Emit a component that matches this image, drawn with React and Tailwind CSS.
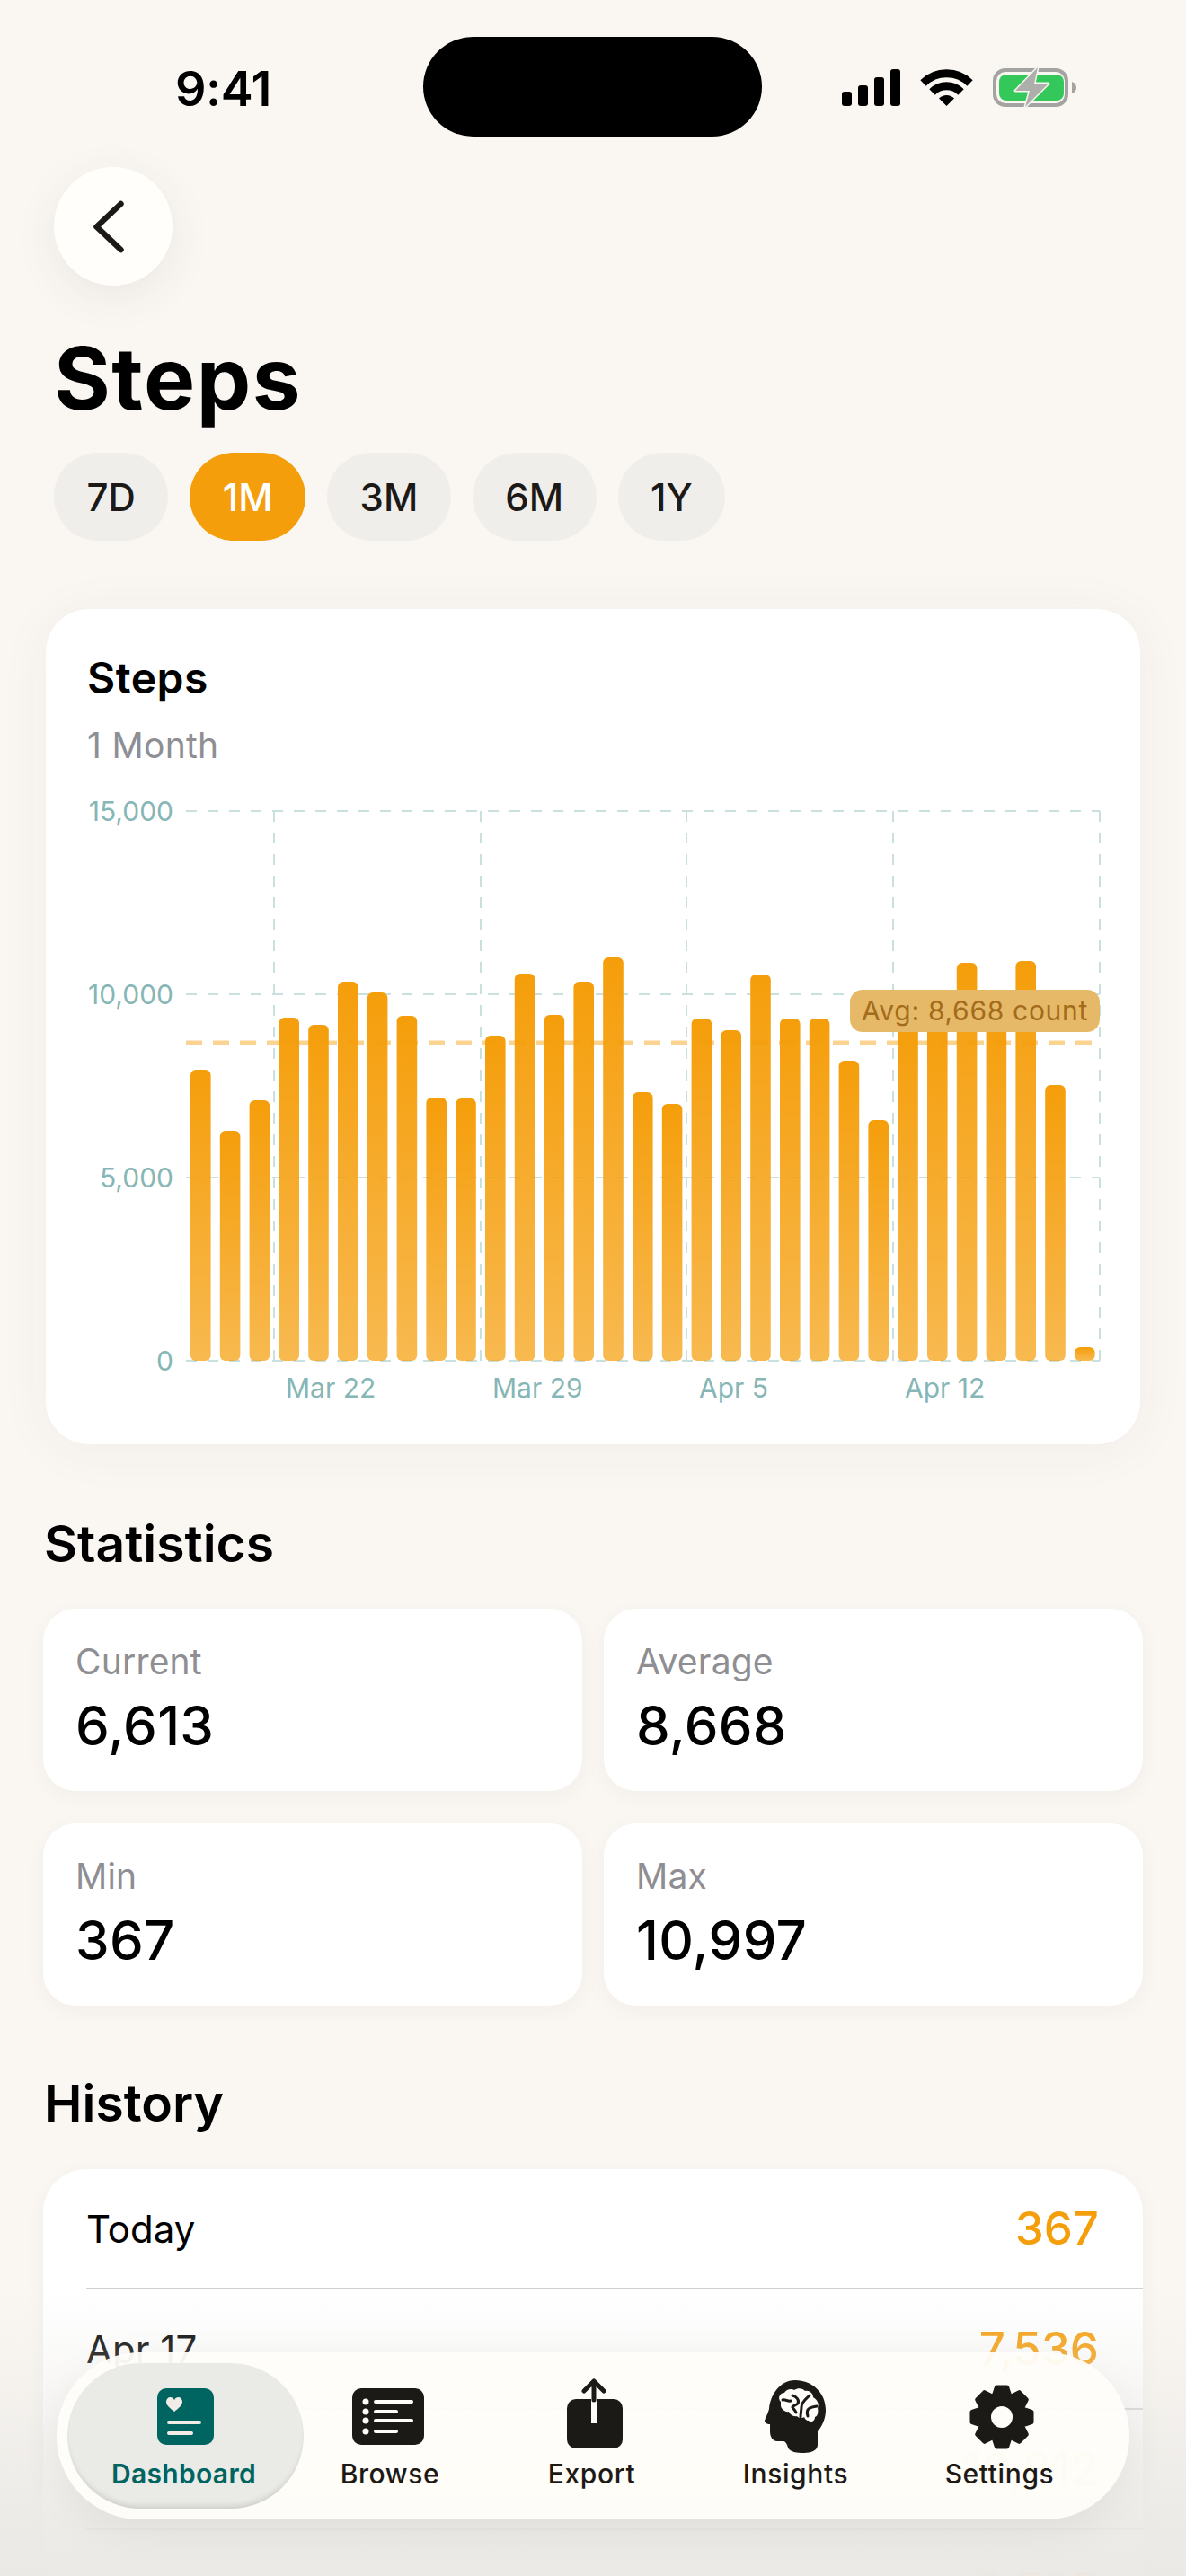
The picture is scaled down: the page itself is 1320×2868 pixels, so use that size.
import React from 'react';

const RANGES = ['7D', '1M', '3M', '6M', '1Y'];

// top edge of each bar, in page pixels
const BAR_TOPS = [
  1191, 1259, 1225, 1133, 1141, 1093, 1105, 1131, 1222, 1223, 1153, 1084, 1130, 1093, 1066, 1216,
  1229, 1134, 1147, 1085, 1134, 1134, 1181, 1247, 1140, 1130, 1072, 1120, 1070, 1208, 1500,
];
const BASELINE = 1515;

const Y_TICKS = [
  { label: '15,000', y: 903 },
  { label: '10,000', y: 1107 },
  { label: '5,000', y: 1311 },
  { label: '0', y: 1515 },
];
const GRID_X = [305, 535, 764, 994, 1224];
const X_LABELS = [
  { label: 'Mar 22', x: 318 },
  { label: 'Mar 29', x: 548 },
  { label: 'Apr 5', x: 778 },
  { label: 'Apr 12', x: 1007 },
];

const STATS = [
  { label: 'Current', value: '6,613' },
  { label: 'Average', value: '8,668' },
  { label: 'Min', value: '367' },
  { label: 'Max', value: '10,997' },
];

const HISTORY = [
  { date: 'Today', value: '367' },
  { date: 'Apr 17', value: '7,536' },
  { date: 'Apr 16', value: '10,812' },
  { date: 'Apr 15', value: '9,785' },
];

const StatusIcons = () => (
  <svg width="270" height="52" viewBox="930 70 270 52">
    <rect x="937" y="101" width="11" height="16" rx="3" fill="#000" />
    <rect x="955" y="94" width="11" height="23" rx="3" fill="#000" />
    <rect x="973" y="85" width="11" height="32" rx="3" fill="#000" />
    <rect x="991" y="76" width="11" height="41" rx="3" fill="#000" />
    <g transform="translate(1025 75)" fill="none" stroke="#000" strokeWidth="9">
      <path d="M2.5 16.5 A37 37 0 0 1 54.5 16.5" />
      <path d="M12.5 26.5 A22.5 22.5 0 0 1 44.5 26.5" />
      <path d="M28.5 42 L20 33.5 A12 12 0 0 1 37 33.5 Z" fill="#000" stroke="none" />
    </g>
    <rect x="1107" y="77" width="80" height="39" rx="12" fill="none" stroke="#a3a3a1" strokeWidth="4" />
    <rect x="1112" y="82" width="72" height="29" rx="8" fill="#34c759" />
    <path d="M1193 90 C1196 91 1198 93 1198 96.5 C1198 100 1196 102 1193 103 Z" fill="#a3a3a1" />
    <path
      d="M1155 74 L1130 100 L1146 100 L1141 118 L1167 92 L1151 92 Z"
      fill="#aeaeab"
      stroke="#f8f6f1"
      strokeWidth="3"
      strokeLinejoin="round"
      paintOrder="stroke"
    />
  </svg>
);

const Chart = () => (
  <svg className="block" width="1218" height="754" viewBox="51 854 1218 754">
    <defs>
      <linearGradient id="bar" x1="0" y1="0" x2="0" y2="1">
        <stop offset="0%" stopColor="#f59e0b" />
        <stop offset="100%" stopColor="#f59e0b" stopOpacity="0.72" />
      </linearGradient>
    </defs>
    {Y_TICKS.map((tick) => (
      <g key={tick.label}>
        <text x="193" y={tick.y + 11} textAnchor="end" fontSize="30" fill="#86b6b5">
          {tick.label}
        </text>
        <line x1="207" x2="1224" y1={tick.y} y2={tick.y} stroke="#c9e0de" strokeWidth="2" strokeDasharray="12 12" />
      </g>
    ))}
    {GRID_X.map((x) => (
      <line key={x} x1={x} x2={x} y1="903" y2="1515" stroke="#c9e0de" strokeWidth="2" strokeDasharray="12 12" />
    ))}
    {BAR_TOPS.map((top, i) => (
      <rect key={i} x={212 + 32.8 * i} y={top} width="22.6" height={BASELINE - top} rx="6" fill="url(#bar)" />
    ))}
    <line x1="207" x2="1216" y1="1161" y2="1161" stroke="#f59e0b" strokeOpacity="0.45" strokeWidth="5" strokeDasharray="18 12" />
    <rect x="946" y="1102" width="278" height="47" rx="14" fill="#e6b969" />
    <text x="959" y="1136" fontSize="30" letterSpacing="0.7" fill="#a36c1a">
      Avg: 8,668 count
    </text>
    {X_LABELS.map((tick) => (
      <text key={tick.label} x={tick.x} y="1556" fontSize="30" fill="#86b6b5">
        {tick.label}
      </text>
    ))}
  </svg>
);

const gearPath = () => {
  const pts = [];
  for (let i = 0; i < 8; i++) {
    const a = -Math.PI / 2 + (i * Math.PI) / 4;
    [[-0.36, 25], [-0.17, 33.5], [0.17, 33.5], [0.36, 25]].forEach(([da, r]) => {
      pts.push(`${(47 + r * Math.cos(a + da)).toFixed(2)} ${(43 + r * Math.sin(a + da)).toFixed(2)}`);
    });
  }
  return `M${pts.join(' L')} Z`;
};

const DashboardIcon = () => (
  <svg width="90" height="86" viewBox="0 0 90 86">
    <rect x="15" y="11" width="63" height="63" rx="10" fill="#006561" />
    <path
      d="M35 37 C30 33 26 30 26 26 C26 23 28 21 30.500 21 C32.500 21 34 22 35 24 C36 22 37.500 21 39.500 21 C42 21 44 23 44 26 C44 30 40 33 35 37 Z"
      transform="translate(-1 0)"
      fill="#f1ece6"
    />
    <rect x="26" y="47" width="38" height="4" rx="2" fill="#f1ece6" />
    <rect x="26" y="59" width="29" height="4" rx="2" fill="#f1ece6" />
  </svg>
);

const BrowseIcon = () => (
  <svg width="90" height="86" viewBox="0 0 90 86">
    <rect x="3" y="11" width="80" height="63" rx="10" fill="#1c1a17" />
    {[26, 37, 47, 59].map((y, i) => (
      <g key={y} fill="#fefdf9">
        <circle cx="18" cy={y} r="3.500" />
        <rect x="27" y={y - 2} width={i % 2 === 0 ? 44 : 27} height="4" rx="2" />
      </g>
    ))}
  </svg>
);

const ExportIcon = () => (
  <svg width="90" height="86" viewBox="0 0 90 86">
    <rect x="17" y="23" width="62" height="55" rx="10" fill="#1c1a17" />
    <rect x="44" y="23" width="6" height="27" fill="#fefdf9" />
    <path d="M47 24 V3 M36 14 L47 3 L58 14" fill="none" stroke="#1c1a17" strokeWidth="5" strokeLinecap="round" strokeLinejoin="round" />
  </svg>
);

const InsightsIcon = () => (
  <svg width="90" height="86" viewBox="0 0 90 86">
    <g transform="translate(10 2)">
      <path
        d="M34 0 C53 0 68 14 68 33 C68 43 64 51 59 57 L59 72 C59 78 52 81 44 81 C36 81 28 80 26 75 C25 71 23 68 21 68 L14 68 C9 68 6 63 6 57 L6 49 C2 49 0 47 0 45 C1 41 4 37 5 32 C6 18 16 0 34 0 Z"
        fill="#1c1a17"
      />
      <path
        d="M18 24 C14 20 17 14 22 14 C24 10 30 9 33 11 C37 8 43 9 45 12 C50 11 54 15 54 19 C59 22 61 27 59 31 C60 36 59 40 56 41 C56 45 52 48 49 45 C46 45 45 43 44 41 C42 43 37 42 36 40 C32 41 28 38 27 35 C23 36 18 32 18 28 Z"
        fill="#fefdf9"
      />
      <path
        d="M20 22 C23 21 26 24 29 23 M31 17 C35 18 39 22 37 26 C35 28 32 28 31 30 C32 32 34 33 35 36 M50 17 C46 21 41 24 41 30 C41 33 40 37 40 41 M58 29 C54 30 50 30 48 33 C47 35 47 37 48 40"
        fill="none"
        stroke="#1c1a17"
        strokeWidth="3"
        strokeLinecap="round"
      />
    </g>
  </svg>
);

const SettingsIcon = () => (
  <svg width="90" height="86" viewBox="0 0 90 86">
    <path d={gearPath()} fill="#1c1a17" stroke="#1c1a17" strokeWidth="5" strokeLinejoin="round" />
    <circle cx="47" cy="43" r="12" fill="#fefdf9" />
  </svg>
);

const NAV_ITEMS = [
  { label: 'Dashboard', Icon: DashboardIcon, active: true },
  { label: 'Browse', Icon: BrowseIcon, offset: 'pl-[5px]' },
  { label: 'Export', Icon: ExportIcon },
  { label: 'Insights', Icon: InsightsIcon },
  { label: 'Settings', Icon: SettingsIcon },
];

const SectionTitle = ({ children, className }) => (
  <h2 className={`text-[57px] leading-[72px] font-semibold text-black ${className}`}>{children}</h2>
);

const App = () => (
  <div className="relative h-[2868px] w-[1320px] overflow-hidden bg-[#faf7f3] font-['Inter',sans-serif] text-black">
    {/* status bar */}
    <div className="flex items-center pt-[41px] pl-[195px]">
      <span className="mt-[3px] w-[276px] text-[54px] font-semibold tracking-[-0.5px]">9:41</span>
      <div className="h-[111px] w-[377px] rounded-full bg-black" />
      <div className="ml-[82px]">
        <StatusIcons />
      </div>
    </div>

    <div className="px-[60px]">
      <button
        type="button"
        className="mt-[34px] block h-[132px] w-[132px] rounded-full bg-[#fffefa] shadow-[0_12px_48px_rgba(60,40,20,0.08)]"
      >
        <svg width="132" height="132" viewBox="0 0 132 132">
          <path d="M74.500 41 L47.500 66.500 L74.500 92" fill="none" stroke="#1c1917" strokeWidth="6.500" strokeLinecap="round" strokeLinejoin="round" />
        </svg>
      </button>
      <h1 className="mt-[43px] text-[96px] leading-[120px] font-bold tracking-[1.5px]">Steps</h1>
      <div className="mt-[23px] flex gap-[24px]">
        {RANGES.map((range) => (
          <span
            key={range}
            className={
              range === '1M'
                ? 'flex h-[98px] items-center rounded-full bg-[#f59e0b] px-[36.5px] text-[42px] font-medium text-white'
                : 'flex h-[98px] items-center rounded-full bg-[#f0eeeb] px-[36.5px] text-[42px] font-medium text-[#1c1917]'
            }
          >
            {range}
          </span>
        ))}
      </div>
    </div>

    <div className="px-[48px]">
      <section className="mx-[3px] mt-[76px] h-[930px] rounded-[48px] bg-white shadow-[0_6px_60px_rgba(60,40,20,0.05)]">
        <div className="px-[46px] pt-[48px]">
          <h2 className="text-[48px] leading-[58px] font-semibold tracking-[0.5px]">Steps</h2>
          <p className="mt-[22px] text-[39px] leading-[48px] tracking-[0.3px] text-[#8e8e93]">1 Month</p>
        </div>
        <Chart />
      </section>

      <SectionTitle className="mt-[75px] pl-[1px]">Statistics</SectionTitle>
      <div className="mt-[36px] grid grid-cols-2 gap-x-[24px] gap-y-[36px]">
        {STATS.map((stat) => (
          <div key={stat.label} className="h-[203px] rounded-[36px] bg-white px-[36px] pt-[35px] shadow-[0_6px_24px_rgba(60,40,20,0.04)]">
            <p className="text-[39px] leading-[48px] tracking-[0.2px] text-[#8e8e93]">{stat.label}</p>
            <p className="mt-[11px] text-[60px] leading-[72px] font-medium tracking-[0.3px]">{stat.value}</p>
          </div>
        ))}
      </div>

      <SectionTitle className="mt-[73px] pl-[1px]">History</SectionTitle>
      <div className="mt-[37px] rounded-t-[48px] bg-white shadow-[0_6px_24px_rgba(60,40,20,0.04)]">
        {HISTORY.map((row) => (
          <div key={row.date} className="ml-[48px] flex h-[134px] items-center justify-between border-b-2 border-[#d0d0d2] pr-[49px]">
            <span className="text-[42px]">{row.date}</span>
            <span className="text-[51px] font-medium text-[#f59e0b]">{row.value}</span>
          </div>
        ))}
      </div>
    </div>

    {/* fade behind the tab bar */}
    <div className="pointer-events-none absolute inset-x-0 bottom-0 h-[320px] bg-[linear-gradient(to_bottom,rgba(235,233,229,0),rgba(235,233,229,0.2)_20%,rgba(235,233,229,0.88)_80%,rgba(235,233,229,0.98))]" />

    <nav className="absolute top-[2619px] left-[63px] h-[186px] w-[1194px] rounded-[93px] bg-[#fefdf9]/95 shadow-[0_12px_48px_rgba(0,0,0,0.06)]">
      <div className="absolute top-[12px] left-[12px] h-[162px] w-[263px] rounded-[81px] bg-[#eaeae7] shadow-[inset_0_-6px_6px_-3px_rgba(0,0,0,0.12)]" />
      <div className="relative grid w-[1163px] grid-cols-5 pt-[29px] pl-[28px]">
        {NAV_ITEMS.map(({ label, Icon, active, offset }) => (
          <div key={label} className={`flex flex-col items-center ${offset || ''}`}>
            <Icon />
            <span
              className={
                active
                  ? 'mt-[2px] text-[30px] leading-[36px] font-semibold tracking-[0.3px] text-[#006561]'
                  : 'mt-[2px] text-[30px] leading-[36px] font-medium tracking-[0.6px] text-[#1c1917]'
              }
            >
              {label}
            </span>
          </div>
        ))}
      </div>
    </nav>
  </div>
);

export default App;
